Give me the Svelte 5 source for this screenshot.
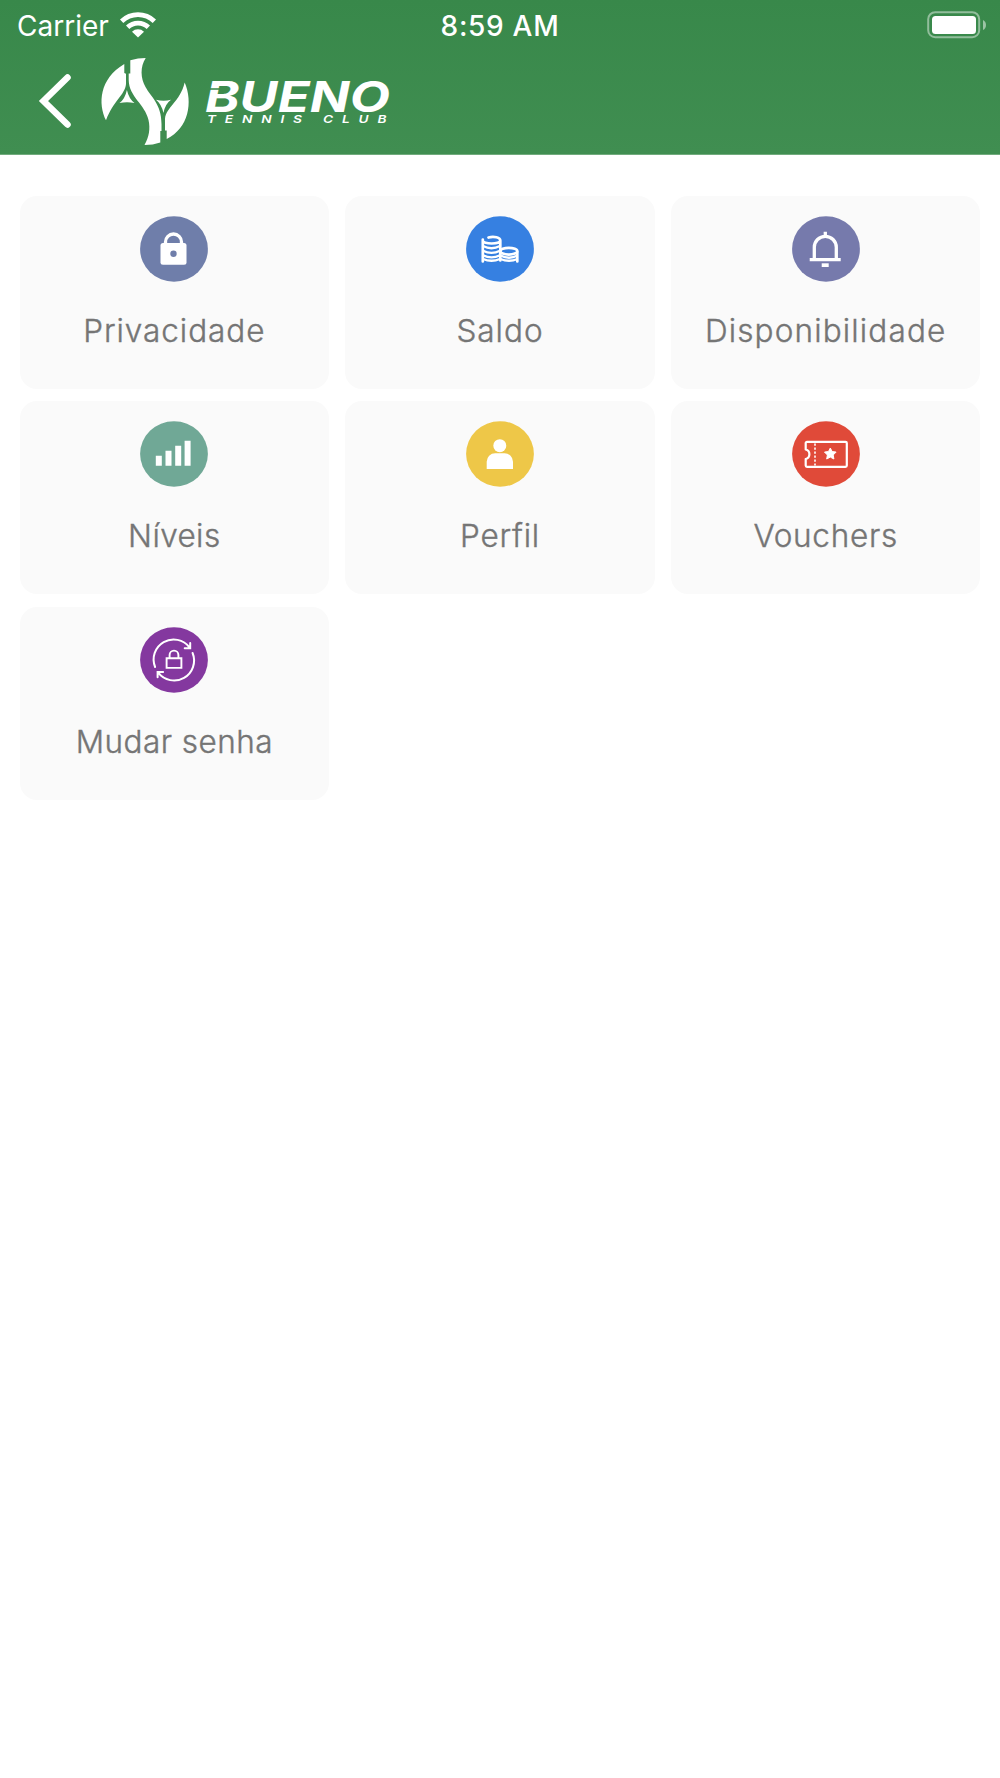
<script>
  const items = [
    { label: 'Privacidade', icon: 'lock', color: '#6f7eaa', spacing: 0.95 },
    { label: 'Saldo', icon: 'coins', color: '#3680e1', spacing: 1 },
    { label: 'Disponibilidade', icon: 'bell', color: '#767aac', spacing: 1.15 },
    { label: 'Níveis', icon: 'levels', color: '#70a896', spacing: 0.4 },
    { label: 'Perfil', icon: 'person', color: '#eec748', spacing: 0.8 },
    { label: 'Vouchers', icon: 'ticket', color: '#e04a39', spacing: 0.7 },
    { label: 'Mudar senha', icon: 'reset', color: '#84389f', spacing: 0.45 }
  ];
</script>

<header>
  <div class="status">
    <div class="carrier">
      <span>Carrier</span>
      <svg class="wifi" width="38" height="28" viewBox="0 0 38 28">
        <path d="M1 9.600a25.500 25.500 0 0 1 36 0l-3.300 3.500a20.800 20.800 0 0 0-29.400 0z" />
        <path d="M7 15.600a17 17 0 0 1 24 0l-3.300 3.400a12.300 12.300 0 0 0-17.400 0z" />
        <path d="M13 21.700a8.600 8.600 0 0 1 12 0L19 27.600z" />
      </svg>
    </div>
    <span class="time">8:59 AM</span>
    <svg class="battery" width="60" height="28" viewBox="0 0 60 28">
      <rect x="1.2" y="1.2" width="51" height="25" rx="7" fill="none" stroke="#fff" stroke-opacity=".45" stroke-width="2" />
      <rect x="5" y="5" width="44" height="18" rx="3.5" fill="#fff" />
      <path d="M56 9q3 1.500 3 5t-3 5z" fill="#fff" fill-opacity=".5" />
    </svg>
  </div>

  <div class="nav">
    <svg class="back" width="34" height="58" viewBox="0 0 34 58">
      <path d="M29.500 5.500 5.500 29 29.500 52.500" fill="none" stroke="#fff" stroke-width="6.500" stroke-linecap="round" />
    </svg>
    <svg class="logo" width="300" height="94" viewBox="98 54 300 94">
      <g fill="#fff">
        <path d="M124.300 64V73l1.700.7V84C125 95 113 101 106 120.300C98 104 99 79 124.300 64z" />
        <path d="M130.300 60.300Q138 58 145.700 58C140 67 140.500 78 145.500 87C151 97 161.500 104 161.500 124V131h-1.200V142.500Q153 145 144.500 145C149 137 150.500 129 148.500 120C145 104 129 97 128.700 80V73.500h1.600z" />
        <path d="M184.700 82.500C193 102 189 128 166.700 139V130.500H165V119C166 107 180 102 184.700 82.500z" />
        <path d="M126.900 90Q129 99 134.500 103Q127 101.500 119.500 103Q125 99 126.900 90z" />
        <path d="M156 99.700Q163.500 102 171 99.700Q165 104 163.500 113Q161.500 104 156 99.700z" />
      </g>
      <text class="brand" x="205" y="111.500" textLength="185" lengthAdjust="spacingAndGlyphs">BUENO</text>
      <path d="M206 89h16" stroke="#3e8c4f" stroke-width="1.600" />
      <text class="tagline" transform="translate(207 123) scale(1.300 1)" textLength="138">TENNIS CLUB</text>
    </svg>
  </div>
</header>

<main>
  {#each items as item}
    <button class="card">
      <svg class="icon" width="68" height="66" viewBox="0 0 68 66">
        <ellipse cx="34" cy="33" rx="33.900" ry="32.800" fill={item.color} />
        {#if item.icon === 'lock'}
          <rect x="20.500" y="27" width="26" height="21.700" rx="2.500" fill="#fff" />
          <path class="line" d="M25.500 29v-3a8 8 0 0 1 16 0v3" stroke-width="3.300" />
          <circle cx="33.500" cy="37.700" r="3.200" fill={item.color} />
        {:else if item.icon === 'coins'}
          <path class="line" stroke-width="2.700" stroke-linecap="round" d="M16.800 23.500V45.500M34.300 24.500V44.500M51.300 36V45.500M22.500 21.500C28 20 34.300 21.500 34.300 24.500C34.300 28.500 16.800 28.500 16.800 24.500" />
          <path class="line" stroke-width="2.300" d="M17 30q8.500 4.500 17 0M17 34.700q8.500 4.500 17 0M17 39.200q8.500 4.500 17 0M17 43q8.500 3.500 17 0M34.500 39.500q8.500 4.500 17 0M34.500 43q8.500 3.500 17 0" />
          <ellipse class="line" cx="42.800" cy="35.200" rx="8.500" ry="3.400" stroke-width="2.700" />
        {:else if item.icon === 'bell'}
          <path class="line" stroke-width="3.300" d="M17.700 43.700h31M22.300 43.700V31.300a11 11 0 0 1 22 0V43.700M33.300 20.300V15.700" />
          <path d="M29.700 47.300h7V51h-7z" fill="#fff" />
        {:else if item.icon === 'levels'}
          <path d="M15.800 34.700h6v10h-6zM25.500 29.700h6v15h-6zM35.200 24.700h6v20h-6zM44.600 19.700h6v25h-6z" fill="#fff" />
        {:else if item.icon === 'person'}
          <circle cx="33.800" cy="24.700" r="6.500" fill="#fff" />
          <path d="M20.700 48v-7.200a8.500 8.500 0 0 1 8.500-8.500h9.300a8.500 8.500 0 0 1 8.500 8.500V48z" fill="#fff" />
        {:else if item.icon === 'ticket'}
          <path class="line" stroke-width="2.200" stroke-linejoin="round" d="M15 20.800H53.500a1.300 1.300 0 0 1 1.300 1.300V44.500a1.300 1.300 0 0 1-1.300 1.300H15a1.300 1.300 0 0 1-1.300-1.300V38a4.900 4.900 0 0 0 0-9.500V22.100a1.300 1.300 0 0 1 1.300-1.300z" />
          <path class="line" stroke-width="1.600" stroke-dasharray="2.200 1.800" d="M23 22.500v22" />
          <path d="m38.300 27 1.800 3.500 4 .6-2.900 2.900.7 4-3.600-1.900-3.600 1.900.7-4-2.900-2.900 4-.6z" fill="#fff" stroke="#fff" stroke-linejoin="round" />
        {:else}
          <path class="line" stroke-width="2" stroke-linecap="round" d="M15.100 40A20 20 0 0 1 49.500 20.300M52.600 26A20 20 0 0 1 18.200 45.700M50.200 16v5.300h-5.500M17.600 50.300v-5.400h5.500" />
          <path class="line" stroke-width="1.900" d="M26.600 31.300h14.800v9.600H26.600zM29.600 31v-3a4.400 4.400 0 0 1 8.800 0v3" />
        {/if}
      </svg>
      <span class="label" style="letter-spacing: {item.spacing}px">{item.label}</span>
    </button>
  {/each}
</main>

<style>
  :global(body) {
    margin: 0;
    background: #fff;
  }
  header {
    box-sizing: border-box;
    height: 155px;
    color: #fff;
    background: linear-gradient(#38884a, #408e51);
    border-bottom: 1px solid #71ab7d;
  }
  .status {
    display: grid;
    grid-template-columns: 1fr auto 1fr;
    align-items: center;
    height: 51px;
    padding: 0 17px;
    font: 28px Inter, sans-serif;
  }
  .carrier {
    display: flex;
    align-items: center;
    gap: 10px;
  }
  .wifi {
    fill: #fff;
    margin-top: -4px;
  }
  .time {
    font-weight: 500;
    letter-spacing: 0.7px;
  }
  .battery {
    justify-self: end;
    margin: -2px -4px 0 0;
  }
  .nav {
    display: flex;
    align-items: center;
    height: 100px;
    padding-left: 38px;
  }
  .back {
    margin-right: 26px;
  }
  .logo {
    display: block;
  }
  .brand {
    font: italic 700 42px Inter, sans-serif;
    fill: #fff;
  }
  .tagline {
    font: italic 600 10.5px Inter, sans-serif;
    fill: #fff;
  }
  main {
    display: grid;
    grid-template-columns: repeat(3, 1fr);
    gap: 12.3px 16px;
    padding: 41px 19.5px 0;
  }
  .card {
    display: flex;
    flex-direction: column;
    align-items: center;
    height: 193px;
    padding: 20px 0 0;
    border: 0;
    border-radius: 17px;
    background: #fafafa;
  }
  .icon {
    flex: none;
  }
  .line {
    fill: none;
    stroke: #fff;
  }
  .label {
    margin-top: 29px;
    font: 300 31.5px/40px Inter, sans-serif;
    color: #757575;
    -webkit-text-stroke: 0.4px #757575;
    white-space: nowrap;
  }
</style>
